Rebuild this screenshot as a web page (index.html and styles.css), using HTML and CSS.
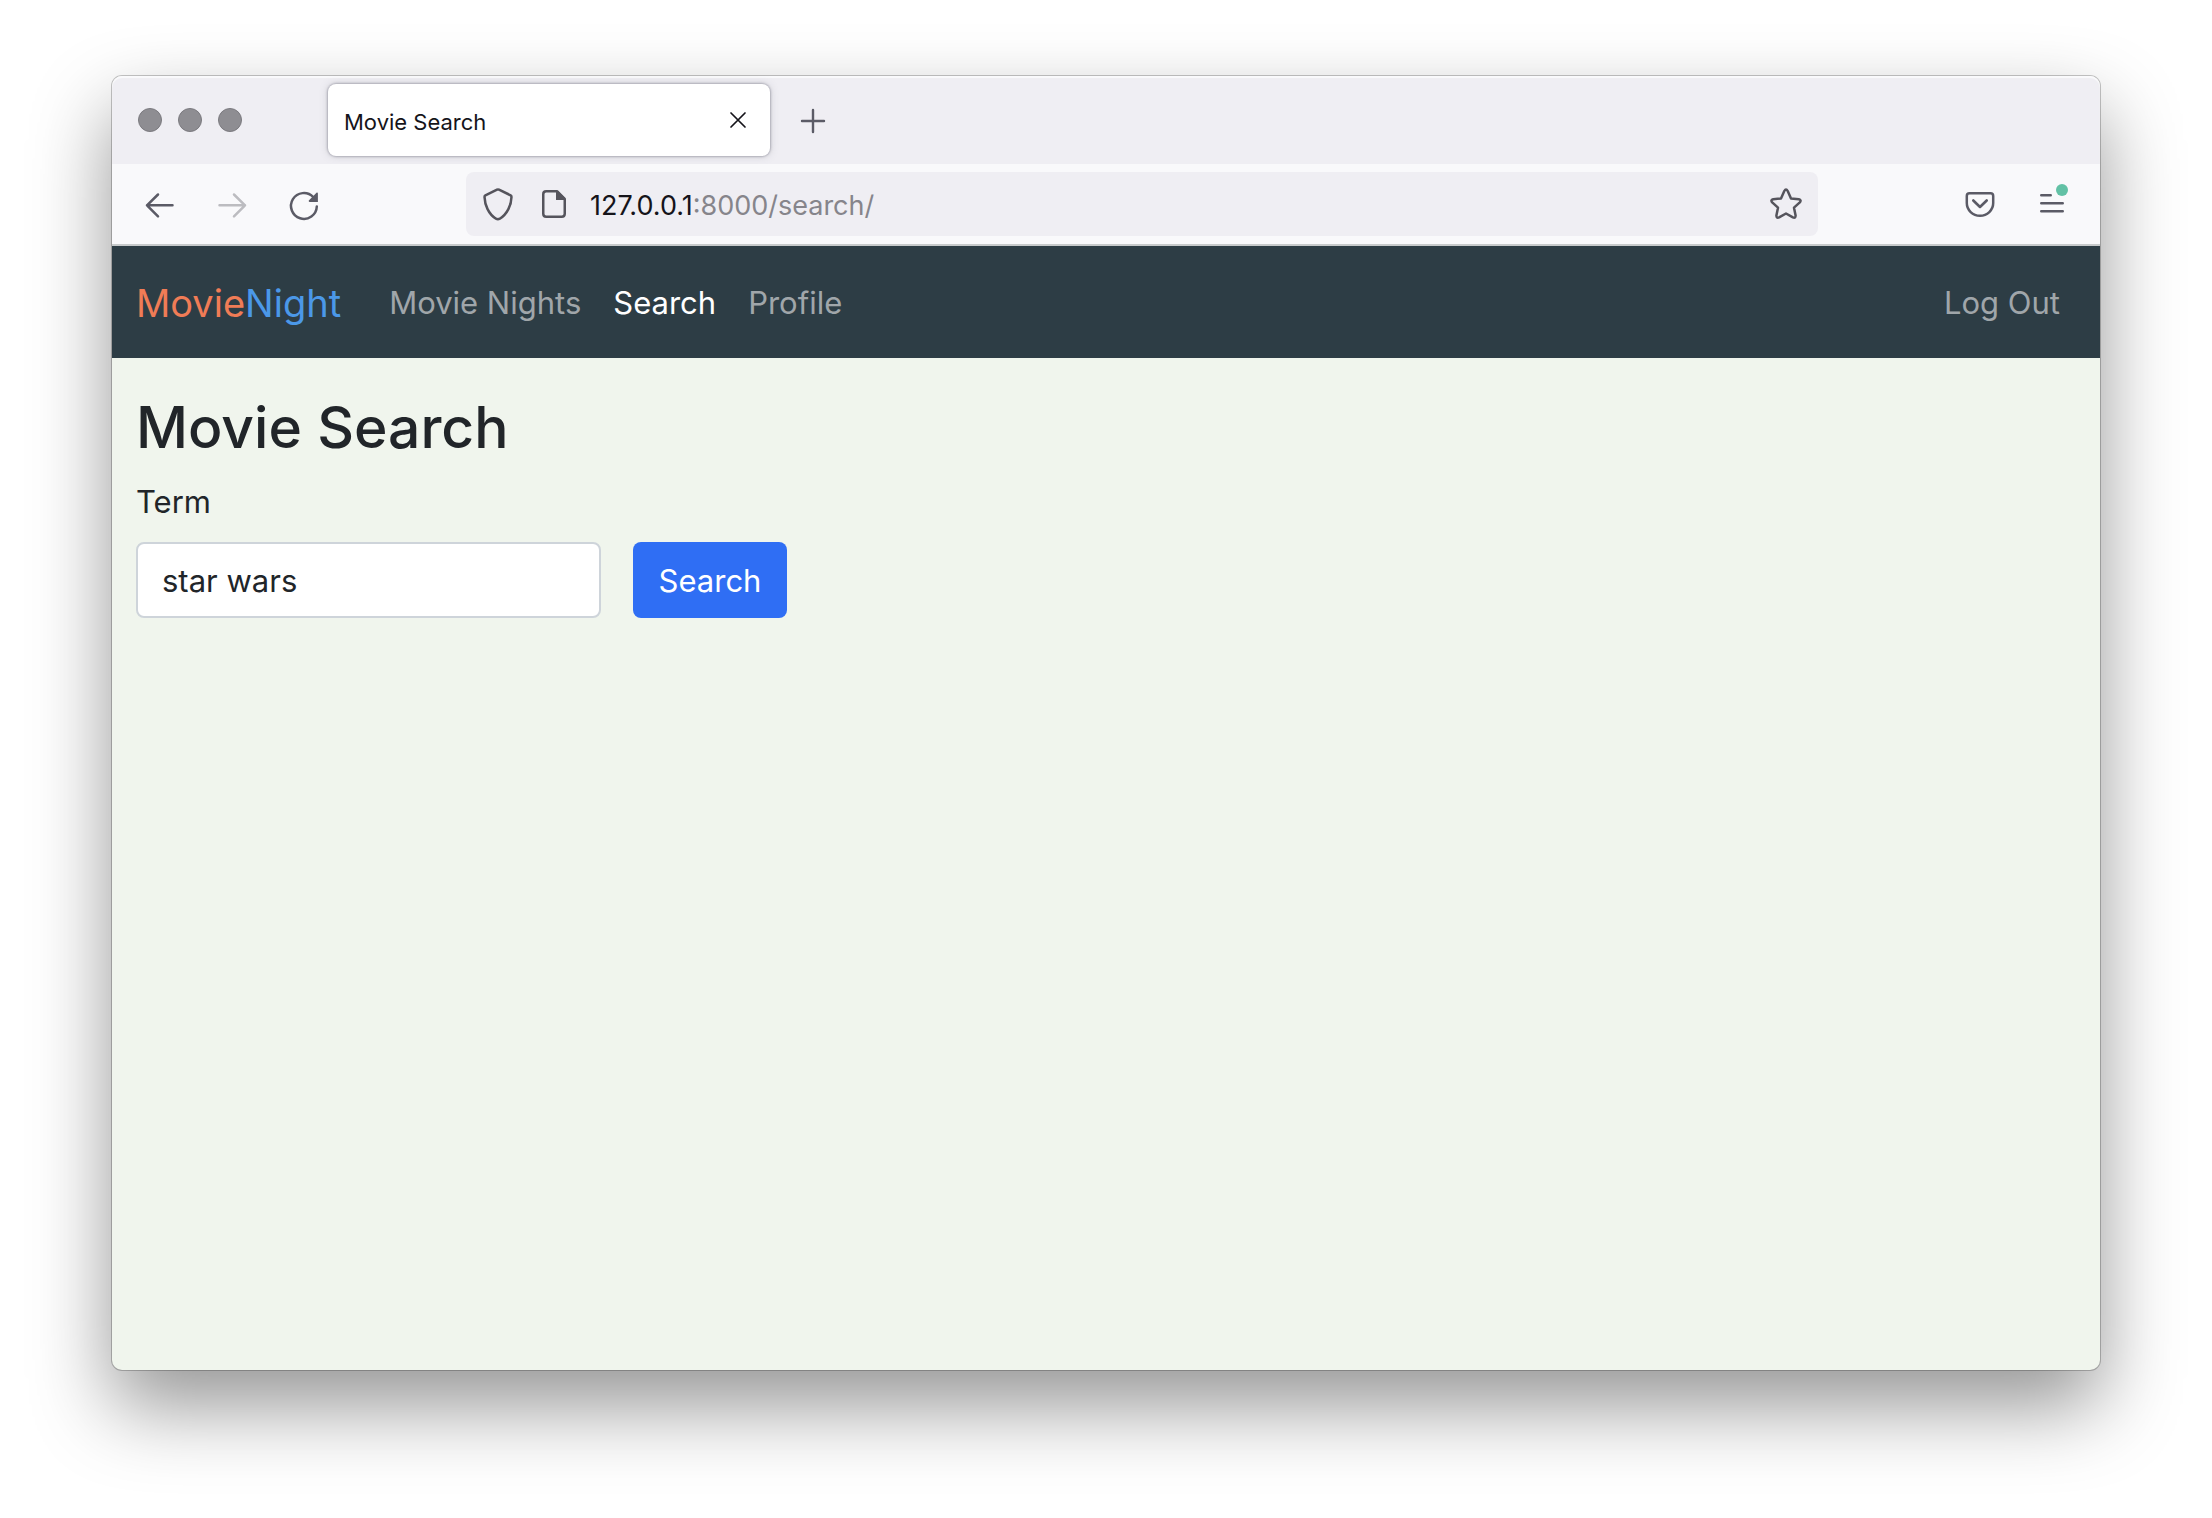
FILE: index.html
```html
<!DOCTYPE html>
<html lang="en">
<head>
<meta charset="utf-8">
<title>Movie Search</title>
<link rel="stylesheet" href="styles.css">
</head>
<body>
<div class="window">
  <div class="tab-bar">
    <div class="lights"><span class="light"></span><span class="light"></span><span class="light"></span></div>
    <div class="tab">
      <span class="tab-title">Movie Search</span>
      <button class="tab-close" type="button" aria-label="Close tab">
        <svg width="16" height="16" viewBox="0 0 16 16"><path d="M1 1l14 14M15 1L1 15" stroke="#15141a" stroke-width="1.7" stroke-linecap="round"/></svg>
      </button>
    </div>
    <button class="new-tab" type="button" aria-label="New tab">
      <svg width="24" height="24" viewBox="0 0 24 24"><path d="M12 2v22M1 13h22" stroke="#5b5b66" stroke-width="2.4" stroke-linecap="round"/></svg>
    </button>
  </div>
  <div class="toolbar">
    <button class="tool" type="button" aria-label="Back">
      <svg width="32" height="32" viewBox="0 0 32 32" fill="none" stroke="#5b5b66" stroke-width="2.5" stroke-linecap="round" stroke-linejoin="round"><path d="M14 6.500L3 17.300l11 11M3 17.300H28.500"/></svg>
    </button>
    <button class="tool" type="button" aria-label="Forward" disabled>
      <svg width="32" height="32" viewBox="0 0 32 32" fill="none" stroke="#bcbcc0" stroke-width="2.500" stroke-linecap="round" stroke-linejoin="round"><path d="M18 6.500l11 10.800-11 11M29 17.300H3.500"/></svg>
    </button>
    <button class="tool" type="button" aria-label="Reload">
      <svg width="32" height="32" viewBox="0 0 32 32"><path d="M28.800 18.500A12.900 12.900 0 1 1 25.200 9" fill="none" stroke="#5b5b66" stroke-width="2.500" stroke-linecap="round"/><path d="M29.900 5.500v8.400h-8.200c-1 0-1.300-1-.7-1.700L28.500 4.800c.6-.6 1.400-.3 1.400.7z" fill="#5b5b66"/></svg>
    </button>
    <div class="address">
      <svg class="shield" width="32" height="34" viewBox="0 0 32 34" fill="none" stroke="#55545c" stroke-width="2.500" stroke-linejoin="round"><path d="M15 2.700L3.400 8.300Q2.500 8.800 2.500 9.900C2.800 18 6.500 27 14 31.700q1.900 1.100 3.800 0C25.300 27 29.300 18 29.500 9.900q0-1.100-.9-1.600L17 2.700q-1-.5-2 0z"/></svg>
      <svg class="page" width="24" height="28" viewBox="0 0 24 28"><path d="M15 1.250H4.200Q1.250 1.250 1.250 4.200v19.600q0 2.950 2.950 2.950h15.600q2.950 0 2.950-2.950V9z" fill="none" stroke="#55545c" stroke-width="2.500" stroke-linejoin="round"/><path d="M14 1h2l7 7v2h-9z" fill="#55545c"/></svg>
      <div class="url"><span class="host">127.0.0.1</span>:8000/search/</div>
      <button class="bookmark" type="button" aria-label="Bookmark">
        <svg width="32" height="32" viewBox="0 0 32 32" fill="none" stroke="#55545c" stroke-width="2.500" stroke-linejoin="round"><path d="M14.300 3q1.700-3 3.400 0l3.300 7.500 7.800.8q2.900.8 1 3.100l-5.800 5.300 1.600 7.700q.1 3.100-2.700 2L16 25.500l-6.900 3.900q-2.800 1.100-2.700-2l1.600-7.700L2.200 14.400q-1.900-2.300 1-3.100l7.800-.8z"/></svg>
      </button>
    </div>
    <button class="tool" type="button" aria-label="Pocket">
      <svg width="32" height="32" viewBox="0 0 32 32" fill="none" stroke="#5b5b66" stroke-width="2.500" stroke-linecap="round" stroke-linejoin="round"><path d="M5.500 5.300h21q2.700 0 2.700 2.700v7a13.200 12.800 0 0 1-26.400 0V8q0-2.700 2.700-2.700z"/><path d="M9.300 12.500l6.700 6.500 6.700-6.500" stroke-width="2.600"/></svg>
    </button>
    <button class="tool" type="button" aria-label="Menu">
      <svg width="32" height="32" viewBox="0 0 32 32"><path d="M5.300 7.300h9.400M5.300 15.300h21.400M5.300 23.300h21.400" stroke="#5b5b66" stroke-width="2.600" stroke-linecap="round"/><circle cx="26" cy="2" r="6" fill="#62c1a5"/></svg>
    </button>
  </div>
  <nav class="navbar">
    <a class="brand" href="#"><span class="brand-movie">Movie</span><span class="brand-night">Night</span></a>
    <a class="nav-link" href="#">Movie Nights</a>
    <a class="nav-link active" href="#">Search</a>
    <a class="nav-link" href="#">Profile</a>
    <a class="nav-link logout" href="#">Log Out</a>
  </nav>
  <main class="content">
    <h1>Movie Search</h1>
    <form>
      <label for="term">Term</label>
      <div class="row">
        <input id="term" type="text" value="star wars">
        <button class="submit" type="button">Search</button>
      </div>
    </form>
  </main>
</div>
</body>
</html>
```

FILE: styles.css
```css
* { box-sizing: border-box; }
body {
  margin: 0;
  min-height: 100vh;
  padding: 76px 112px 148px;
  display: flex;
  background: #fff;
  font-family: Inter, "Liberation Sans", sans-serif;
  overflow-x: hidden;
}
button { border: 0; padding: 0; background: none; font: inherit; }
svg { display: block; overflow: visible; flex: none; }
a { text-decoration: none; }

.window {
  flex: 1;
  min-width: 0;
  display: flex;
  flex-direction: column;
  border-radius: 10px;
  background: #f0f5ed;
  box-shadow: 0 0 0 1px rgba(0, 0, 0, .22), 0 36px 80px rgba(0, 0, 0, .42);
}

.tab-bar {
  height: 88px;
  display: flex;
  align-items: center;
  padding: 0 26px;
  background: #efeef3;
  border-radius: 10px 10px 0 0;
  box-shadow: inset 0 2px 1px rgba(255, 255, 255, .7);
}
.lights { display: flex; gap: 16px; margin-right: 86px; }
.light {
  width: 24px;
  height: 24px;
  border-radius: 50%;
  background: #8e8d92;
  border: 1px solid #7b7a7f;
}
.tab {
  width: 442px;
  height: 72px;
  display: flex;
  align-items: center;
  justify-content: space-between;
  padding: 0 24px 0 16px;
  border-radius: 8px;
  background: #fff;
  box-shadow: 0 0 2px 1px rgba(128, 128, 142, .5), 0 0 8px rgba(128, 128, 142, .3);
}
.tab-title { padding-top: 4px; font-size: 22px; line-height: 28px; color: #15141a; }
.new-tab { margin-left: 31px; }

.toolbar {
  height: 82px;
  display: flex;
  align-items: center;
  gap: 8px;
  padding: 0 16px;
  background: #f9f9fb;
  border-bottom: 2px solid #c7cacb;
}
.tool { width: 64px; height: 64px; display: grid; place-items: center; }
.address {
  flex: 1;
  min-width: 0;
  height: 64px;
  display: flex;
  align-items: center;
  margin: 0 122px;
  padding: 0 16px;
  border-radius: 8px;
  background: #efeef3;
}
.page { margin: 0 24px 0 28px; }
.url { flex: 1; font-size: 27px; line-height: 32px; padding-top: 4px; color: #86858b; }
.host { color: #15141a; }

.navbar {
  height: 112px;
  display: flex;
  align-items: center;
  gap: 32px;
  padding: 2px 40px 0 24px;
  background: #2d3d45;
}
.brand { margin-right: 16px; font-size: 38px; line-height: 48px; }
.brand-movie { color: #f07c56; }
.brand-night { color: #4b98e8; }
.nav-link { font-size: 31px; line-height: 48px; color: #a0a6aa; }
.nav-link.active { color: #fff; }
.logout { margin-left: auto; }

.content { padding: 34px 24px; color: #212529; }
h1 { margin: 0 0 14px; font-size: 57px; line-height: 72px; font-weight: 500; }
label { display: block; margin-bottom: 16px; font-size: 31px; line-height: 48px; }
.row { display: flex; gap: 32px; }
input {
  width: 465px;
  height: 76px;
  padding: 0 24px;
  border: 2px solid #ced4da;
  border-radius: 8px;
  background: #fff;
  color: #212529;
  font-family: inherit;
  font-size: 31px;
}
.submit {
  height: 76px;
  width: 154px;
  border-radius: 8px;
  background: #2f6ef4;
  color: #fff;
  font-size: 31px;
}
```
